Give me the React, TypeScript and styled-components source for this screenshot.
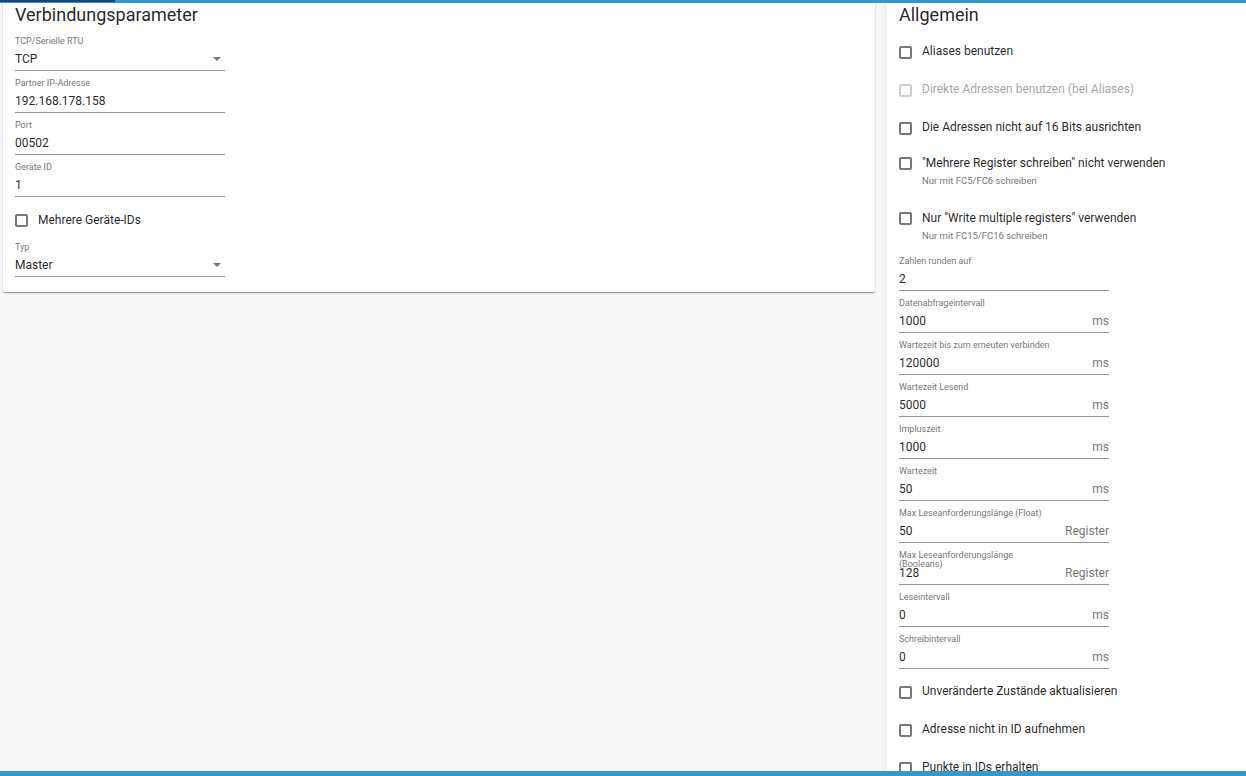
import styled, { createGlobalStyle } from "styled-components";

const GlobalStyle = createGlobalStyle`
    html, body {
        margin: 0;
        padding: 0;
        background: #f8f8f8;
        font-family: Roboto, "Liberation Sans", Arial, sans-serif;
    }
    * {
        box-sizing: border-box;
    }
`;

interface IField {
    label: string;
    value: string;
    unit?: string;
    select?: boolean;
}

interface ICheck {
    label: string;
    hint?: string;
    disabled?: boolean;
}

const leftFields: IField[] = [
    { label: "TCP/Serielle RTU", value: "TCP", select: true },
    { label: "Partner IP-Adresse", value: "192.168.178.158" },
    { label: "Port", value: "00502" },
    { label: "Geräte ID", value: "1" },
];

const topChecks: ICheck[] = [
    { label: "Aliases benutzen" },
    { label: "Direkte Adressen benutzen (bei Aliases)", disabled: true },
    { label: "Die Adressen nicht auf 16 Bits ausrichten" },
    {
        label: "\"Mehrere Register schreiben\" nicht verwenden",
        hint: "Nur mit FC5/FC6 schreiben",
    },
    {
        label: "Nur \"Write multiple registers\" verwenden",
        hint: "Nur mit FC15/FC16 schreiben",
    },
];

const rightFields: IField[] = [
    { label: "Zahlen runden auf", value: "2" },
    { label: "Datenabfrageintervall", value: "1000", unit: "ms" },
    { label: "Wartezeit bis zum erneuten verbinden", value: "120000", unit: "ms" },
    { label: "Wartezeit Lesend", value: "5000", unit: "ms" },
    { label: "Impluszeit", value: "1000", unit: "ms" },
    { label: "Wartezeit", value: "50", unit: "ms" },
    { label: "Max Leseanforderungslänge (Float)", value: "50", unit: "Register" },
    { label: "Max Leseanforderungslänge (Booleans)", value: "128", unit: "Register" },
    { label: "Leseintervall", value: "0", unit: "ms" },
    { label: "Schreibintervall", value: "0", unit: "ms" },
];

const bottomChecks: ICheck[] = [
    { label: "Unveränderte Zustände aktualisieren" },
    { label: "Adresse nicht in ID aufnehmen" },
    { label: "Punkte in IDs erhalten" },
];

const Field = ({ label, value, unit, select }: IField) => (
    <FieldWrapper>
        <FieldLabel>{label}</FieldLabel>
        <FieldInput>
            <FieldValue>{value}</FieldValue>
            {unit && <FieldUnit>{unit}</FieldUnit>}
            {select && <SelectArrow />}
        </FieldInput>
    </FieldWrapper>
);

const Check = ({ label, hint, disabled }: ICheck) => (
    <CheckRow $hint={!!hint}>
        <CheckBox $disabled={disabled} />
        <CheckText>
            <CheckLabel $disabled={disabled}>{label}</CheckLabel>
            {hint && <CheckHint>{hint}</CheckHint>}
        </CheckText>
    </CheckRow>
);

const App = () => {
    return (
        <>
            <GlobalStyle />
            <Page>
                <TopBar>
                    <TopBarTab />
                </TopBar>
                <Main>
                    <LeftColumn>
                        <Card>
                            <Title>Verbindungsparameter</Title>
                            {leftFields.map((f) => (
                                <Field key={f.label} {...f} />
                            ))}
                            <CheckRow $plain>
                                <CheckBox />
                                <CheckLabel>Mehrere Geräte-IDs</CheckLabel>
                            </CheckRow>
                            <Field label="Typ" value="Master" select />
                        </Card>
                    </LeftColumn>
                    <RightPanel>
                        <Title>Allgemein</Title>
                        <TopChecks>
                            {topChecks.map((c) => (
                                <Check key={c.label} {...c} />
                            ))}
                        </TopChecks>
                        <FieldGroup>
                            {rightFields.map((f) => (
                                <Field key={f.label} {...f} />
                            ))}
                        </FieldGroup>
                        <BottomChecks>
                            {bottomChecks.map((c) => (
                                <Check key={c.label} {...c} />
                            ))}
                        </BottomChecks>
                    </RightPanel>
                </Main>
                <BottomBar />
            </Page>
        </>
    );
};

const Page = styled.div`
    display: flex;
    flex-direction: column;
    width: 1246px;
    height: 776px;
    overflow: hidden;
`;

const TopBar = styled.div`
    height: 3px;
    flex-shrink: 0;
    background-color: #3399cc;
`;

const TopBarTab = styled.div`
    width: 115px;
    height: 2px;
    background-color: #164477;
`;

const BottomBar = styled.div`
    height: 5px;
    flex-shrink: 0;
    background-color: #3399cc;
`;

const Main = styled.div`
    display: flex;
    flex: 1;
    min-height: 0;
    gap: 12px;
`;

const LeftColumn = styled.div`
    flex: 1;
    padding-left: 3px;
`;

const Card = styled.div`
    background-color: #fff;
    padding: 0 12px 15px;
    box-shadow: 0 1px 1px rgba(0, 0, 0, 0.35), 0 1px 3px rgba(0, 0, 0, 0.12);
    border-radius: 0 0 2px 2px;
`;

const RightPanel = styled.div`
    width: 359px;
    flex-shrink: 0;
    background-color: #fff;
    padding: 0 12px;
    overflow: hidden;
    box-shadow: -3px 0 8px rgba(0, 0, 0, 0.05);
`;

const Title = styled.h2`
    margin: 0;
    height: 26px;
    line-height: 24px;
    font-size: 18px;
    font-weight: 400;
    color: rgba(0, 0, 0, 0.87);
`;

const TopChecks = styled.div`
    padding-top: 4px;
`;

const FieldGroup = styled.div`
    margin-top: -8px;
`;

const BottomChecks = styled.div`
    padding-top: 4px;
`;

const FieldWrapper = styled.div`
    width: 210px;
    padding-top: 7px;
`;

const FieldLabel = styled.div`
    height: 12px;
    padding-top: 1px;
    font-size: 9px;
    line-height: 9px;
    color: #777;
    max-width: 157px;
`;

const FieldInput = styled.div`
    position: relative;
    display: flex;
    align-items: center;
    height: 23px;
    border-bottom: 1px solid #949494;
`;

const FieldValue = styled.span`
    flex: 1;
    font-size: 12px;
    color: rgba(0, 0, 0, 0.87);
`;

const FieldUnit = styled.span`
    font-size: 12px;
    color: #777;
`;

const SelectArrow = styled.span`
    width: 0;
    height: 0;
    margin-right: 4px;
    border-left: 4px solid transparent;
    border-right: 4px solid transparent;
    border-top: 4px solid #777;
`;

const CheckRow = styled.div<{ $hint?: boolean; $plain?: boolean }>`
    display: flex;
    align-items: ${(p) => (p.$hint ? "flex-start" : "center")};
    gap: 10px;
    height: ${(p) => (p.$hint ? "auto" : p.$plain ? "38px" : "38px")};
    padding: ${(p) => (p.$hint ? "10px 0 15px" : p.$plain ? "8px 0 0" : "0")};
`;

const CheckBox = styled.span<{ $disabled?: boolean }>`
    flex-shrink: 0;
    width: 13px;
    height: 13px;
    border: 2px solid ${(p) => (p.$disabled ? "#cfcfcf" : "#777")};
    border-radius: 2px;
`;

const CheckText = styled.div`
    display: flex;
    flex-direction: column;
    margin-top: -2px;
`;

const CheckLabel = styled.span<{ $disabled?: boolean }>`
    font-size: 12px;
    line-height: 17px;
    color: ${(p) => (p.$disabled ? "#a8a8a8" : "rgba(0, 0, 0, 0.87)")};
`;

const CheckHint = styled.span`
    margin-top: 3px;
    font-size: 9.5px;
    line-height: 12px;
    color: #777;
`;

export default App;
